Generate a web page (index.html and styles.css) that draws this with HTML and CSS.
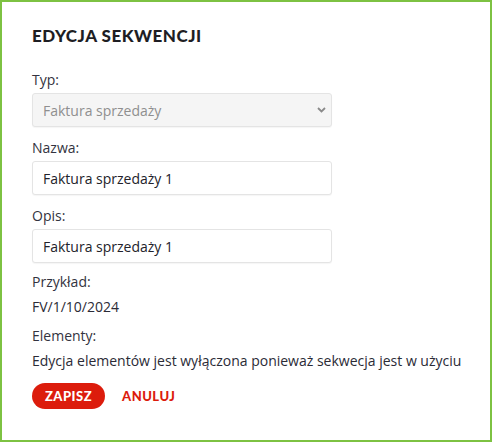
FILE: index.html
```html
<!DOCTYPE html>
<html lang="pl">
<head>
<meta charset="utf-8">
<link rel="stylesheet" href="styles.css">
</head>
<body>
<div class="card">
  <h2 class="title">EDYCJA SEKWENCJI</h2>
  <div class="field">
    <label class="label">Typ:</label>
    <div class="select">
      <span>Faktura sprzedaży</span>
      <svg class="chev" width="9" height="6" viewBox="0 0 9 6"><path d="M1 1 L4.5 4.5 L8 1" fill="none" stroke="#8a8a8a" stroke-width="1.8"/></svg>
    </div>
  </div>
  <div class="field">
    <label class="label">Nazwa:</label>
    <div class="input">Faktura sprzedaży 1</div>
  </div>
  <div class="field last">
    <label class="label">Opis:</label>
    <div class="input">Faktura sprzedaży 1</div>
  </div>
  <div class="info">
    <div class="label">Przykład:</div>
    <div class="value">FV/1/10/2024</div>
  </div>
  <div class="info">
    <div class="label">Elementy:</div>
    <div class="value">Edycja elementów jest wyłączona ponieważ sekwecja jest w użyciu</div>
  </div>
  <div class="actions">
    <button class="btn primary">ZAPISZ</button>
    <button class="btn link">ANULUJ</button>
  </div>
</div>
</body>
</html>
```
FILE: styles.css
```css
* { box-sizing: border-box; }
html, body { margin: 0; padding: 0; background: #fff; }
body { font-family: "Open Sans", sans-serif; font-size: 14px; color: #2b2b36; }
.card {
  width: 492px;
  height: 442px;
  border: 2px solid #7dc242;
  padding: 22px 0 0 30px;
  display: flex;
  flex-direction: column;
}
.title {
  margin: 0 0 22px 0;
  font-family: "Lato", sans-serif;
  font-weight: 900;
  font-size: 17px;
  line-height: 24px;
  letter-spacing: 0.5px;
  color: #1e1e24;
}
.field { display: flex; flex-direction: column; gap: 3px; margin-bottom: 11px; }
.field.last { margin-bottom: 9px; }
.label { line-height: 20px; color: #333340; }
.select, .input {
  width: 300px;
  height: 34px;
  border: 1px solid #e4e4e4;
  border-radius: 3px;
  display: flex;
  align-items: center;
  padding: 0 10px;
  box-shadow: 0 1px 1px rgba(0,0,0,0.04);
}
.select { background: #f5f5f5; color: #8f8f8f; justify-content: space-between; padding-right: 5px; }
.input { background: #fff; color: #22222a; }
.info { display: flex; flex-direction: column; gap: 5px; margin-bottom: 9px; }
.value { line-height: 20px; color: #2b2b36; white-space: nowrap; }
.actions { display: flex; align-items: center; gap: 17px; margin-top: 3px; }
.btn {
  font-family: "Lato", sans-serif;
  font-weight: 900;
  font-size: 13px;
  letter-spacing: 0.5px;
  border: none;
  background: none;
  padding: 0;
  cursor: pointer;
}
.btn.primary {
  background: #dc1c0c;
  color: #fff;
  height: 26px;
  width: 73px;
  border-radius: 13px;
}
.btn.link { color: #dc1c0c; }
```
